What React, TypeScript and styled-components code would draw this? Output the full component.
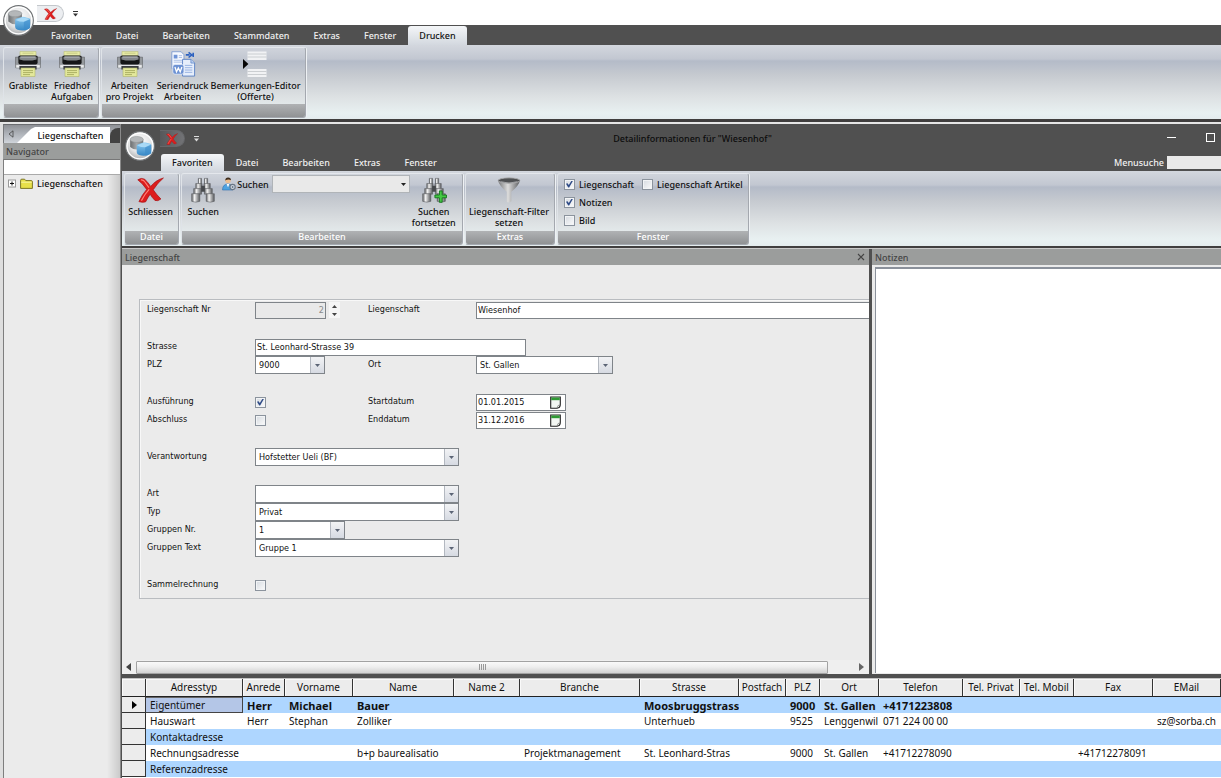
import React from 'react';
import styled, { createGlobalStyle } from 'styled-components';

const UI = `"Noto Sans", "Open Sans", sans-serif`;
const FORM = `"DejaVu Sans Condensed", "DejaVu Sans", sans-serif`;
const RIBBON = `linear-gradient(180deg, #d3d7de 0px, #c2c7d1 14px, #b4bbc8 16px, #c6cad0 30px, #dde1e3 52px, #e8f0f1 68px, #e4ecee 100%)`;

const GlobalStyle = createGlobalStyle`
  *, *::before, *::after { box-sizing: border-box; }
  html, body, #root { height: 100%; }
  body { margin: 0; background: #fff; font-family: ${UI}; font-size: 9px; font-weight: 500; line-height: 11px; color: #111; overflow: hidden; }
  button, input, select, textarea { font: inherit; color: inherit; margin: 0; padding: 0; border: 0; border-radius: 0; background: none; outline: none; }
  svg { display: block; flex: none; }
`;

/* ---------- window chrome ---------- */
const Page = styled.div`
  display: flex;
  flex-direction: column;
  min-height: 100vh;
`;
const TitleStrip = styled.header`
  position: relative;
  display: flex;
  align-items: flex-start;
  height: 25px;
  padding: 5px 0 0 37px;
  background: #fff;
`;
const OrbButton = styled.button<{ $x: number; $y: number }>`
  position: absolute;
  left: ${(p) => p.$x}px;
  top: ${(p) => p.$y}px;
  z-index: 2;
`;
const QuickBar = styled.div<{ $dark?: boolean }>`
  display: flex;
  align-items: center;
  gap: 8px;
  color: ${(p) => (p.$dark ? '#ddd' : '#333')};
`;
const QuickPill = styled.button<{ $dark?: boolean }>`
  display: flex;
  align-items: center;
  justify-content: center;
  width: ${(p) => (p.$dark ? 25 : 27)}px;
  height: 17px;
  border: 1px solid ${(p) => (p.$dark ? '#66676a' : '#c3c7cb')};
  border-left: 0;
  border-radius: 0 9px 9px 0;
  background: ${(p) => (p.$dark ? 'linear-gradient(90deg, #56575a, #727376)' : '#eceef1')};
`;
const MenuBar = styled.nav<{ $inner?: boolean }>`
  display: flex;
  align-items: stretch;
  height: ${(p) => (p.$inner ? 18 : 20)}px;
  padding-left: 39px;
  background: #505050;
`;
const MenuTab = styled.button<{ $active?: boolean }>`
  display: flex;
  align-items: center;
  padding: 0 12px;
  color: ${(p) => (p.$active ? '#111' : '#f0f0f0')};
  ${(p) =>
    p.$active &&
    `margin-top: 1px; padding: 0 11px; border-radius: 3px 3px 0 0; background: linear-gradient(180deg, #f4f6f8, #d3d8df);`}
`;
const MenuSearch = styled.label`
  display: flex;
  align-items: center;
  gap: 3px;
  margin-left: auto;
  color: #f0f0f0;
`;
const MenuSearchInput = styled.input`
  width: 54px;
  height: 13px;
  background: #e9e9e9;
  color: #111;
`;

/* ---------- ribbon ---------- */
const Ribbon = styled.div<{ $inner?: boolean }>`
  display: flex;
  gap: 2px;
  height: 77px;
  padding: 2px 0 1px ${(p) => (p.$inner ? 2 : 3)}px;
  background: ${RIBBON};
  border-bottom: ${(p) => (p.$inner ? 2 : 3)}px solid #403e3e;
`;
const Group = styled.section<{ $w: number }>`
  display: flex;
  flex-direction: column;
  flex: none;
  width: ${(p) => p.$w}px;
  border: 1px solid #a4a8af;
  border-top-color: #e4e7ec;
  border-left-color: #dfe3e8;
  border-radius: 3px;
  box-shadow: 1px 0 0 #eef1f4;
  overflow: hidden;
`;
const GroupBody = styled.div`
  display: flex;
  flex: 1;
  align-items: flex-start;
  justify-content: center;
  padding: 1px 2px 0 0;
`;
const GroupFoot = styled.div`
  height: 13px;
  line-height: 12px;
  text-align: center;
  color: #fff;
  background: linear-gradient(180deg, #b0b2b4, #909294);
`;
const BigButton = styled.button<{ $w: number }>`
  display: flex;
  flex-direction: column;
  align-items: center;
  flex: none;
  gap: 3px;
  width: ${(p) => p.$w}px;
  padding-top: 2px;
  white-space: nowrap;
  text-align: center;
`;
const SearchTool = styled.label`
  display: flex;
  align-items: center;
  gap: 1px;
  height: 18px;
`;
const CheckGrid = styled.div`
  display: grid;
  grid-template-columns: 78px auto;
  grid-auto-rows: 18px;
  width: 100%;
  padding-left: 6px;
`;
const CheckLabel = styled.label`
  display: flex;
  align-items: center;
  gap: 4px;
  white-space: nowrap;
`;
const Check = styled.input.attrs({ type: 'checkbox' })`
  appearance: none;
  display: grid;
  place-items: center;
  flex: none;
  width: 11px;
  height: 11px;
  border: 1px solid #8b939d;
  background: linear-gradient(135deg, #d5dae0, #fbfbfb);
  box-shadow: inset 0 0 0 1px #f2f4f6;
  &:checked::after {
    content: '';
    width: 7px;
    height: 7px;
    background: #2e4a86;
    clip-path: polygon(0 45%, 22% 40%, 40% 65%, 80% 0, 100% 5%, 45% 100%, 32% 100%);
  }
`;

/* ---------- work area ---------- */
const Work = styled.div`
  display: flex;
  flex: 1;
  border-top: 2px solid #e6e6e6;
`;
const Navigator = styled.aside`
  display: flex;
  flex-direction: column;
  flex: none;
  width: 121px;
  padding-left: 3px;
  background: #dedede;
  border-right: 1px solid #8a8a8a;
`;
const NavTabs = styled.div`
  display: flex;
  align-items: flex-end;
  height: 19px;
  background: linear-gradient(180deg, #8e9095 0, #a9adb3 40%, #cfd4da 100%);
  border-top: 1px solid #6a6c70;
  border-left: 1px solid #77797c;
`;
const NavArrow = styled.button`
  align-self: center;
  padding: 0 3px 0 4px;
`;
const NavTab = styled.button`
  height: 16px;
  width: 93px;
  padding-left: 14px;
  background: #fff;
  clip-path: polygon(0 100%, 14px 12%, 18px 0, 100% 0, 100% 100%);
`;
const NavTabNext = styled.div`
  flex: 1;
  height: 15px;
  border-radius: 8px 0 0 0;
  background: #424242;
`;
const PaneHead = styled.h2`
  display: flex;
  align-items: center;
  justify-content: space-between;
  flex: none;
  height: 16px;
  margin: 0;
  padding: 0 4px 0 3px;
  font-size: 9px;
  font-weight: inherit;
  color: #444;
  background: #9b9d9c;
`;
const NavBody = styled.div`
  flex: 1;
  border-left: 1px solid #7e7e7e;
  background: linear-gradient(90deg, #ebebeb 0, #ebebeb 103px, #c8c8c8 117px);
`;
const NavFilter = styled.input`
  display: block;
  width: 100%;
  height: 16px;
  background: #fff;
  border-top: 1px solid #777;
  border-bottom: 1px solid #aaa;
`;
const TreeItem = styled.div`
  display: flex;
  align-items: center;
  gap: 4px;
  height: 17px;
  padding-left: 4px;
`;

const Detail = styled.main`
  display: flex;
  flex-direction: column;
  flex: 1;
  min-width: 0;
  background: #505050;
  padding-left: 1px;
`;
const DetailTitle = styled.header`
  position: relative;
  display: grid;
  grid-template-columns: 58px 1fr 54px;
  align-items: center;
  height: 29px;
  padding-left: 38px;
  background: #505050;
`;
const TitleText = styled.h1`
  margin: 0;
  font-size: 9px;
  font-weight: inherit;
  color: #0c0c0c;
  text-align: center;
`;
const WinButtons = styled.div`
  display: flex;
  justify-content: space-between;
  padding-right: 6px;
  padding-bottom: 3px;
`;
const Split = styled.div`
  display: grid;
  grid-template-columns: minmax(0, 747fr) minmax(0, 349fr);
  gap: 3px;
  flex: 1;
  border-top: 1px solid #c9c9c9;
`;
const Pane = styled.section`
  display: flex;
  flex-direction: column;
  min-width: 0;
  background: #ebebeb;
`;
const PlainButton = styled.button`
  color: inherit;
`;
const NotesFrame = styled.div`
  display: flex;
  flex: 1;
  padding: 2px 0 1px 3px;
`;
const Notes = styled.textarea`
  flex: 1;
  width: 100%;
  resize: none;
  background: #fff;
  border: solid #8b919b;
  border-width: 2px 0 0 1px;
`;

/* ---------- form ---------- */
const FormFrame = styled.fieldset`
  min-width: 0;
  margin: 34px 0 0 17px;
  padding: 1px 0 4px 7px;
  border: 1px solid #b9bcc0;
  border-right: 0;
  box-shadow: inset 1px 1px 0 #f8f8f8;
  font-family: ${FORM};
  font-weight: 400;
`;
const Block = styled.div`
  & + & {
    margin-top: 19px;
  }
`;
const Line = styled.div`
  display: grid;
  grid-template-columns: 108px 113px 108px 1fr;
  align-items: center;
  height: 18px;
  white-space: nowrap;
`;
const FieldLabel = styled.label`
  padding-bottom: 1px;
`;
const Field = styled.input<{ $w?: number }>`
  width: ${(p) => (p.$w ? `${p.$w}px` : '100%')};
  height: 17px;
  padding: 0 1px;
  border: 1px solid #7f8489;
  background: #fff;
  &:disabled {
    background: #e9e9e9;
    color: #8a8a8a;
    text-align: right;
  }
`;
const OpenField = styled(Field)`
  border-right: 0;
`;
const SpinWrap = styled.div`
  display: flex;
  align-items: center;
  gap: 3px;
`;
const SpinButtons = styled.div`
  display: flex;
  flex-direction: column;
  background: #f6f6f6;
`;
const SpinButton = styled.button`
  display: grid;
  place-items: center;
  width: 11px;
  height: 8px;
`;
const SelectFrame = styled.div<{ $w: number; $ribbon?: boolean }>`
  display: grid;
  grid-template-areas: 'box';
  width: ${(p) => p.$w}px;
  height: 18px;
  border: 1px solid ${(p) => (p.$ribbon ? '#b0b4b8' : '#7f8489')};
  background: ${(p) => (p.$ribbon ? '#e9e9e9' : '#fff')};
`;
const SelectInput = styled.select`
  grid-area: box;
  appearance: none;
  width: 100%;
  height: 16px;
  padding: 0 16px 0 3px;
`;
const SelectArrow = styled.span<{ $ribbon?: boolean }>`
  grid-area: box;
  justify-self: end;
  display: grid;
  place-items: center;
  width: ${(p) => (p.$ribbon ? 11 : 14)}px;
  pointer-events: none;
  color: ${(p) => (p.$ribbon ? '#222' : '#5b6475')};
  ${(p) => !p.$ribbon && `border-left: 1px solid #b3b8c0; background: linear-gradient(180deg, #f2f3f5, #d6dae2);`}
`;
const DateFrame = styled.div`
  display: flex;
  align-items: center;
  width: 90px;
  height: 17px;
  padding-right: 4px;
  border: 1px solid #7f8489;
  background: #fff;
`;
const DateField = styled.input`
  flex: 1;
  min-width: 0;
  padding-left: 1px;
`;

const ScrollBar = styled.div`
  display: flex;
  align-items: center;
  height: 14px;
  margin-top: auto;
  padding: 0 5px 0 4px;
  background: #efefef;
`;
const ScrollTrack = styled.div`
  flex: 1;
  padding: 0 31px 0 5px;
`;
const ScrollThumb = styled.div`
  display: grid;
  place-items: center;
  height: 13px;
  border: 1px solid #a2a2a2;
  border-radius: 1px;
  background: linear-gradient(180deg, #fafafa 0, #eee 45%, #d2d2d2 100%);
`;

/* ---------- address table ---------- */
const TableFrame = styled.div`
  margin-top: 4px;
  padding-bottom: 1px;
  border-top: 1px solid #c4c4c4;
  background: #fff;
  overflow: hidden;
`;
const Table = styled.table`
  width: 100%;
  table-layout: fixed;
  border-collapse: separate;
  border-spacing: 0;
  font-size: 10px;
  font-weight: 400;
  line-height: 16px;
`;
const Th = styled.th`
  height: 18px;
  padding: 0;
  font-weight: 400;
  line-height: 17px;
  white-space: nowrap;
  background: #ececec;
  border-right: 1px solid #333;
  border-bottom: 1px solid #222;
  box-shadow: inset 1px 1px 0 #fafafa;
`;
const Row = styled.tr<{ $blue?: boolean; $strong?: boolean }>`
  background: ${(p) => (p.$blue ? '#aed6ff' : '#fff')};
  ${(p) => p.$strong && `font-weight: 700; font-size: 11px;`}
`;
const Td = styled.td`
  height: 16px;
  padding: 0 0 0 4px;
  line-height: 15px;
  white-space: nowrap;
  overflow: hidden;
`;
const TypeCell = styled(Td)<{ $focus?: boolean }>`
  ${(p) => p.$focus && `background: #b4c6e7; box-shadow: inset -1px -1px 0 #444, inset 0 1px 0 #666; font-weight: 400; font-size: 10px;`}
`;
const Marker = styled.td`
  height: 16px;
  padding: 0 0 0 10px;
  background: #ececec;
  border-right: 1px solid #333;
  border-bottom: 1px solid #333;
`;

/* ---------- icons ---------- */
const Orb = ({ size }: { size: number }) => (
  <svg width={size} height={size} viewBox="0 0 32 32">
    <defs>
      <radialGradient id={`orb${size}`} cx="50%" cy="35%" r="65%">
        <stop offset="0" stopColor="#ffffff" />
        <stop offset=".6" stopColor="#e2e3e4" />
        <stop offset="1" stopColor="#a6a8aa" />
      </radialGradient>
      <linearGradient id={`cyl${size}`} x1="0" x2="1">
        <stop offset="0" stopColor="#6b6e70" />
        <stop offset=".5" stopColor="#a5a8aa" />
        <stop offset="1" stopColor="#727577" />
      </linearGradient>
      <linearGradient id={`cube${size}`} x1="0" x2="0" y1="0" y2="1">
        <stop offset="0" stopColor="#8ecdf3" />
        <stop offset="1" stopColor="#3787c4" />
      </linearGradient>
    </defs>
    <circle cx="16" cy="16" r="15.3" fill={`url(#orb${size})`} stroke="#707375" strokeWidth="1.2" />
    <circle cx="16" cy="16" r="13.8" fill="none" stroke="#fff" strokeWidth="1.4" />
    <path d="M5.5 9 V17 Q11 22 19.5 18 V9 Z" fill={`url(#cyl${size})`} />
    <ellipse cx="12.5" cy="9" rx="7" ry="3.2" fill="#b4b7b9" stroke="#85898c" strokeWidth=".5" />
    <path d="M12.5 15.8 Q12.5 14.6 14 14 L19.5 12.3 Q20.5 12 22 12.3 L27 13.6 Q28 14 28 15.2 V22.6 Q28 24 26.6 24.7 Q21 27.6 15 25.6 Q12.7 24.8 12.5 22.6 Z" fill={`url(#cube${size})`} />
    <path d="M13 15.4 L20 12.6 L27.6 14.4 L21.5 17.4 Q17 17.4 13 15.4 Z" fill="#a9d9f6" />
    <path d="M21.5 17.6 V26.2 Q25 25.8 28 23.5 V14.7 Z" fill="#3a8bc9" opacity=".6" />
  </svg>
);

const RedCross = ({ w, h }: { w: number; h: number }) => (
  <svg width={w} height={h} viewBox="0 0 28 26" preserveAspectRatio="none">
    <path d="M.8 2.8 Q4.5 .4 8 2.2 Q11.4 5.4 14.2 9.4 Q19.6 3 27.4 1 Q21.2 6 16.8 12.8 Q20 17.4 24.8 22 Q21.6 24.6 18.6 23.4 Q15.6 20.6 13.6 17.2 Q10.8 21 9 24.8 Q5.4 26 2 24.6 Q5 18 10 12.4 Q6 6.6 .8 2.8 Z" fill="#dc1d1d" stroke="#a81215" strokeWidth=".7" />
    <path d="M4 3 Q6.5 2.6 8.2 5 L12.4 10.6 M4.6 23.6 Q7.8 17.4 12.6 12.4" fill="none" stroke="#ff8278" strokeWidth="1.2" />
  </svg>
);

const QuickArrow = () => (
  <svg width="7" height="6" viewBox="0 0 7 6">
    <path d="M1 .5 H6" stroke="currentColor" strokeWidth="1" />
    <path d="M1 2.5 H6 L3.5 5.5 Z" fill="currentColor" />
  </svg>
);

const Caret = () => (
  <svg width="5" height="3" viewBox="0 0 5 3">
    <path d="M0 0 H5 L2.5 3 Z" fill="currentColor" />
  </svg>
);

const Printer = () => (
  <svg width="26" height="26" viewBox="0 0 26 26">
    <path d="M5 .4 H21 V7 H5 Z" fill="#e6eaa6" stroke="#b9bd76" strokeWidth=".6" />
    <path d="M7.5 2.2 H18.5" stroke="#c0c47c" strokeWidth=".8" />
    <path d="M.4 6.2 H3.4 V5.4 H22.6 V6.2 H25.6 V16.4 H.4 Z" fill="#94989c" stroke="#5c5f63" strokeWidth=".6" />
    <path d="M.8 13.6 H25.2 V17 H.8 Z" fill="#e9ebed" stroke="#777a7e" strokeWidth=".5" />
    <rect x="3.4" y="4.4" width="19.2" height="9" rx="2" fill="#151617" />
    <path d="M5.4 5.4 H20.6 Q21.6 5.4 21.6 6.4 V8.4 Q13 10.8 4.4 8.4 V6.4 Q4.4 5.4 5.4 5.4 Z" fill="#83878b" />
    <path d="M5.6 6 H20.4" stroke="#c9ccce" strokeWidth=".8" />
    <path d="M4.4 15 H21.6 V18.6 H4.4 Z" fill="#3a3c3f" />
    <path d="M6 17 H20 V25.5 H6 Z" fill="#e3e89b" stroke="#b0b56c" strokeWidth=".6" />
    <path d="M8 19.6 H18 M8 21.6 H18 M8 23.6 H15" stroke="#9da255" strokeWidth=".8" />
  </svg>
);

const MailMerge = () => (
  <svg width="26" height="26" viewBox="0 0 28 28">
    <path d="M2 .8 H12 L15 4 V19 H2 Z" fill="#f5f8fe" stroke="#6c8fcd" strokeWidth=".8" />
    <path d="M4 4 H8 V8 H4 Z" fill="#6f93d6" />
    <path d="M9.5 5 H13 M9.5 7 H13 M4 10 H13 M4 12 H13" stroke="#9fb7e2" strokeWidth=".9" />
    <path d="M13.5 9 H22.5 L26.5 13 V27 H13.5 Z" fill="#e6eefb" stroke="#4e78bf" strokeWidth=".9" />
    <path d="M22.5 9 V13 H26.5" fill="#b8cdf0" stroke="#4e78bf" strokeWidth=".7" />
    <path d="M16 15.5 H24 M16 18 H24 M16 20.5 H24 M16 23 H24" stroke="#8aa8dd" strokeWidth=".9" />
    <path d="M17 4.2 H21 M20 1.5 L23.5 4.2 L20 7 M25 2 V6.5" fill="none" stroke="#2c61c0" strokeWidth="1.7" />
    <rect x="3" y="14.5" width="12" height="10.5" rx="2.5" fill="#6d92d3" stroke="#e8effb" strokeWidth=".8" />
    <path d="M5.3 17.3 L7 22.4 L9 18.3 L11 22.4 L12.8 17.3" fill="none" stroke="#fff" strokeWidth="1.4" />
  </svg>
);

const RemarkEditor = () => (
  <svg width="26" height="26" viewBox="0 0 26 26">
    <path d="M0 8 L5.4 13 L0 18 Z" fill="#050505" />
    <path d="M4.5 .5 H23.5 V9 H4.5 Z M4.5 18 H23.5 V26 H4.5 Z" fill="#f1f2f4" />
    <path d="M4.5 3 H23.5 M4.5 6 H23.5 M4.5 20.5 H23.5 M4.5 23.5 H23.5" stroke="#c6c9cd" strokeWidth=".9" />
  </svg>
);

const Binoculars = ({ plus }: { plus?: boolean }) => (
  <svg width="26" height="26" viewBox="0 0 28 28">
    <defs>
      <linearGradient id={plus ? 'binB' : 'binA'} x1="0" x2="1">
        <stop offset="0" stopColor="#5b5d60" />
        <stop offset=".35" stopColor="#f2f2f2" />
        <stop offset="1" stopColor="#56585b" />
      </linearGradient>
    </defs>
    <g fill={`url(#${plus ? 'binB' : 'binA'})`} stroke="#5b5d60" strokeWidth=".6">
      <path d="M9 1.5 H12.4 V9 H9 Z" />
      <path d="M15.6 1.5 H19 V9 H15.6 Z" />
      <path d="M6.2 7 H13 V13 H6.2 Z" />
      <path d="M15 7 H21.8 V13 H15 Z" />
      <path d="M4 12.5 H12.4 V18.5 H4 Z" />
      <path d="M15.6 12.5 H24 V18.5 H15.6 Z" />
      <path d="M1.8 18 H10.6 V26.2 Q6 28 1.8 26.2 Z" />
      <path d="M17.4 18 H26.2 V26.2 Q22 28 17.4 26.2 Z" />
    </g>
    <path d="M12 9.5 H16 V16 H12 Z" fill="#47494c" />
    {plus && (
      <path d="M19.8 15 H22.8 V19.4 H27.4 V22.4 H22.8 V27.2 H19.8 V22.4 H15 V19.4 H19.8 Z" fill="#45c845" stroke="#11761a" strokeWidth="1" />
    )}
  </svg>
);

const Funnel = () => (
  <svg width="26" height="26" viewBox="0 0 28 28">
    <defs>
      <linearGradient id="fun" x1="0" x2="1">
        <stop offset="0" stopColor="#77797b" />
        <stop offset=".45" stopColor="#dcdcdc" />
        <stop offset="1" stopColor="#5e6062" />
      </linearGradient>
    </defs>
    <path d="M2.3 3.8 Q3 9 11.5 16 V27 Q14 28 16.5 26 V16 Q25 9 25.7 3.8 Z" fill="url(#fun)" />
    <ellipse cx="14" cy="3.8" rx="11.7" ry="2.9" fill="#4f5153" stroke="#b4b5b6" strokeWidth=".9" />
    <path d="M5 5 Q14 8.2 23 5" fill="none" stroke="#a9abad" strokeWidth=".9" />
  </svg>
);

const PersonSearch = () => (
  <svg width="14" height="14" viewBox="0 0 14 14">
    <circle cx="6" cy="3.6" r="2.7" fill="#eebd8c" />
    <path d="M3.2 3.4 Q3.4 .3 6.2 .4 Q9 .5 8.9 3.2 Q6.5 1.8 3.2 3.4 Z" fill="#3d2c1d" />
    <path d="M.5 13 Q.6 7.2 5.8 7 Q10 7 10.8 11 V13 Z" fill="#4fa3e0" stroke="#2b6fae" strokeWidth=".6" />
    <path d="M4.6 7 L6 10.2 L7.4 7 Z" fill="#fff" />
    <circle cx="10.6" cy="10" r="2.6" fill="#cfd8e2" stroke="#6a7684" strokeWidth="1.1" />
    <circle cx="10.6" cy="10" r=".9" fill="#6a7684" />
  </svg>
);

const Folder = () => (
  <svg width="13" height="12" viewBox="0 0 13 12">
    <path d="M.6 2.4 Q.6 1.2 1.8 1.2 H4.6 L5.8 2.6 H11.2 Q12.4 2.6 12.4 3.8 V10.4 H.6 Z" fill="#e8e04a" stroke="#6f6a1a" strokeWidth=".9" />
    <path d="M1.2 4.2 H11.8" stroke="#fbf8b0" strokeWidth=".9" />
  </svg>
);

const PlusBox = () => (
  <svg width="8" height="9" viewBox="0 0 8 9">
    <rect x=".5" y="1" width="7" height="7" fill="#fff" stroke="#999" />
    <path d="M2 4.5 H6 M4 2.5 V6.5" stroke="#111" />
  </svg>
);

const Calendar = () => (
  <svg width="11" height="13" viewBox="0 0 11 13">
    <path d="M.7 1 H10.3 V9 Q10 12 7 12.2 H.7 Z" fill="#f3f7f3" stroke="#222" strokeWidth="1.1" />
    <path d="M1.2 1.5 H9.8 V4.2 H1.2 Z" fill="#2f9a34" />
    <path d="M10.3 8.8 Q7.4 8.6 7 12.2" fill="none" stroke="#777" strokeWidth=".7" />
  </svg>
);

const Triangle = ({ dir, color = '#444' }: { dir: 'left' | 'right' | 'up' | 'down'; color?: string }) => {
  const d = {
    left: 'M5 0 V8 L0 4 Z',
    right: 'M0 0 V8 L5 4 Z',
    up: 'M0 3 H5 L2.5 0 Z',
    down: 'M0 0 H5 L2.5 3 Z',
  }[dir];
  const tall = dir === 'left' || dir === 'right';
  return (
    <svg width="5" height={tall ? 8 : 3} viewBox={tall ? '0 0 5 8' : '0 0 5 3'}>
      <path d={d} fill={color} />
    </svg>
  );
};

/* ---------- composed controls ---------- */
const Combo = ({ id, w, value, ribbon, label }: { id?: string; w: number; value: string; ribbon?: boolean; label?: string }) => (
  <SelectFrame $w={w} $ribbon={ribbon}>
    <SelectInput id={id} defaultValue={value} aria-label={label}>
      <option value={value}>{value}</option>
    </SelectInput>
    <SelectArrow $ribbon={ribbon}>
      <Caret />
    </SelectArrow>
  </SelectFrame>
);

const DateInput = ({ id, value }: { id: string; value: string }) => (
  <DateFrame>
    <DateField id={id} defaultValue={value} />
    <PlainButton aria-label="Kalender">
      <Calendar />
    </PlainButton>
  </DateFrame>
);

const menuMain = ['Favoriten', 'Datei', 'Bearbeiten', 'Stammdaten', 'Extras', 'Fenster', 'Drucken'];
const menuDetail = ['Favoriten', 'Datei', 'Bearbeiten', 'Extras', 'Fenster'];

const columns: [string, number?][] = [
  ['Adresstyp', 97],
  ['Anrede', 42],
  ['Vorname', 68],
  ['Name', 101],
  ['Name 2', 66],
  ['Branche', 120],
  ['Strasse', 99],
  ['Postfach', 47],
  ['PLZ', 34],
  ['Ort', 59],
  ['Telefon', 84],
  ['Tel. Privat', 57],
  ['Tel. Mobil', 54],
  ['Fax', 79],
  ['EMail'],
];

const addresses: string[][] = [
  ['Eigentümer', 'Herr', 'Michael', 'Bauer', '', '', 'Moosbruggstrass', '', '9000', 'St. Gallen', '+4171223808', '', '', '', ''],
  ['Hauswart', 'Herr', 'Stephan', 'Zolliker', '', '', 'Unterhueb', '', '9525', 'Lenggenwil', '071 224 00 00', '', '', '', 'sz@sorba.ch'],
  ['Kontaktadresse', '', '', '', '', '', '', '', '', '', '', '', '', '', ''],
  ['Rechnungsadresse', '', '', 'b+p baurealisatio', '', 'Projektmanagement', 'St. Leonhard-Stras', '', '9000', 'St. Gallen', '+41712278090', '', '', '+41712278091', ''],
  ['Referenzadresse', '', '', '', '', '', '', '', '', '', '', '', '', '', ''],
];

export default function App() {
  return (
    <Page>
      <GlobalStyle />
      <TitleStrip>
        <OrbButton $x={3} $y={5} aria-label="Anwendungsmenü">
          <Orb size={31} />
        </OrbButton>
        <QuickBar>
          <QuickPill aria-label="Schliessen">
            <RedCross w={13} h={12} />
          </QuickPill>
          <QuickArrow />
        </QuickBar>
      </TitleStrip>
      <MenuBar>
        {menuMain.map((m) => (
          <MenuTab key={m} $active={m === 'Drucken'}>
            {m}
          </MenuTab>
        ))}
      </MenuBar>
      <Ribbon>
        <Group $w={96}>
          <GroupBody>
            <BigButton $w={44}>
              <Printer />
              Grabliste
            </BigButton>
            <BigButton $w={44}>
              <Printer />
              <span>Friedhof<br />Aufgaben</span>
            </BigButton>
          </GroupBody>
          <GroupFoot />
        </Group>
        <Group $w={205}>
          <GroupBody>
            <BigButton $w={52}>
              <Printer />
              <span>Arbeiten<br />pro Projekt</span>
            </BigButton>
            <BigButton $w={54}>
              <MailMerge />
              <span>Seriendruck<br />Arbeiten</span>
            </BigButton>
            <BigButton $w={92}>
              <RemarkEditor />
              <span>Bemerkungen-Editor<br />(Offerte)</span>
            </BigButton>
          </GroupBody>
          <GroupFoot />
        </Group>
      </Ribbon>

      <Work>
        <Navigator>
          <NavTabs>
            <NavArrow aria-label="Zurück">
              <svg width="6" height="8" viewBox="0 0 6 8">
                <path d="M5 .8 V7.2 L1 4 Z" fill="none" stroke="#444" strokeWidth=".8" />
              </svg>
            </NavArrow>
            <NavTab>Liegenschaften</NavTab>
            <NavTabNext />
          </NavTabs>
          <PaneHead>Navigator</PaneHead>
          <NavBody>
            <NavFilter aria-label="Navigator filtern" />
            <TreeItem>
              <PlusBox />
              <Folder />
              Liegenschaften
            </TreeItem>
          </NavBody>
        </Navigator>

        <Detail>
          <DetailTitle>
            <OrbButton $x={3} $y={7} aria-label="Fenstermenü">
              <Orb size={30} />
            </OrbButton>
            <QuickBar $dark>
              <QuickPill $dark aria-label="Fenster schliessen">
                <RedCross w={12} h={12} />
              </QuickPill>
              <QuickArrow />
            </QuickBar>
            <TitleText>Detailinformationen für "Wiesenhof"</TitleText>
            <WinButtons>
              <PlainButton aria-label="Minimieren">
                <svg width="9" height="9" viewBox="0 0 9 9">
                  <path d="M0 4.5 H9" stroke="#fff" />
                </svg>
              </PlainButton>
              <PlainButton aria-label="Maximieren">
                <svg width="9" height="9" viewBox="0 0 9 9">
                  <rect x=".5" y=".5" width="8" height="8" fill="none" stroke="#fff" />
                </svg>
              </PlainButton>
            </WinButtons>
          </DetailTitle>
          <MenuBar $inner>
            {menuDetail.map((m) => (
              <MenuTab key={m} $active={m === 'Favoriten'}>
                {m}
              </MenuTab>
            ))}
            <MenuSearch>
              Menusuche
              <MenuSearchInput />
            </MenuSearch>
          </MenuBar>
          <Ribbon $inner>
            <Group $w={55}>
              <GroupBody>
                <BigButton $w={50}>
                  <RedCross w={27} h={26} />
                  Schliessen
                </BigButton>
              </GroupBody>
              <GroupFoot>Datei</GroupFoot>
            </Group>
            <Group $w={282}>
              <GroupBody>
                <BigButton $w={38}>
                  <Binoculars />
                  Suchen
                </BigButton>
                <SearchTool>
                  <PersonSearch />
                  Suchen
                  <span />
                  <span />
                  <Combo w={138} value="" ribbon label="Suchen" />
                </SearchTool>
                <BigButton $w={48}>
                  <Binoculars plus />
                  <span>Suchen<br />fortsetzen</span>
                </BigButton>
              </GroupBody>
              <GroupFoot>Bearbeiten</GroupFoot>
            </Group>
            <Group $w={90}>
              <GroupBody>
                <BigButton $w={84}>
                  <Funnel />
                  <span>Liegenschaft-Filter<br />setzen</span>
                </BigButton>
              </GroupBody>
              <GroupFoot>Extras</GroupFoot>
            </Group>
            <Group $w={192}>
              <GroupBody>
                <CheckGrid>
                  <CheckLabel>
                    <Check defaultChecked />
                    Liegenschaft
                  </CheckLabel>
                  <CheckLabel>
                    <Check />
                    Liegenschaft Artikel
                  </CheckLabel>
                  <CheckLabel>
                    <Check defaultChecked />
                    Notizen
                  </CheckLabel>
                  <span />
                  <CheckLabel>
                    <Check />
                    Bild
                  </CheckLabel>
                </CheckGrid>
              </GroupBody>
              <GroupFoot>Fenster</GroupFoot>
            </Group>
          </Ribbon>

          <Split>
            <Pane>
              <PaneHead>
                Liegenschaft
                <PlainButton aria-label="Bereich schliessen">
                  <svg width="8" height="8" viewBox="0 0 8 8">
                    <path d="M1 1 L7 7 M7 1 L1 7" stroke="#444" strokeWidth="1.1" />
                  </svg>
                </PlainButton>
              </PaneHead>
              <FormFrame>
                <Block>
                  <Line>
                    <FieldLabel htmlFor="nr">Liegenschaft Nr</FieldLabel>
                    <SpinWrap>
                      <Field id="nr" $w={71} defaultValue="2" disabled />
                      <SpinButtons>
                        <SpinButton aria-label="Erhöhen">
                          <Triangle dir="up" />
                        </SpinButton>
                        <SpinButton aria-label="Verringern">
                          <Triangle dir="down" />
                        </SpinButton>
                      </SpinButtons>
                    </SpinWrap>
                    <FieldLabel htmlFor="name">Liegenschaft</FieldLabel>
                    <OpenField id="name" defaultValue="Wiesenhof" />
                  </Line>
                </Block>
                <Block>
                  <Line>
                    <FieldLabel htmlFor="str">Strasse</FieldLabel>
                    <Field id="str" $w={271} defaultValue="St. Leonhard-Strasse 39" />
                  </Line>
                  <Line>
                    <FieldLabel htmlFor="plz">PLZ</FieldLabel>
                    <Combo id="plz" w={70} value="9000" />
                    <FieldLabel htmlFor="ort">Ort</FieldLabel>
                    <Combo id="ort" w={137} value="St. Gallen" />
                  </Line>
                </Block>
                <Block>
                  <Line>
                    <FieldLabel htmlFor="ausf">Ausführung</FieldLabel>
                    <Check id="ausf" defaultChecked />
                    <FieldLabel htmlFor="start">Startdatum</FieldLabel>
                    <DateInput id="start" value="01.01.2015" />
                  </Line>
                  <Line>
                    <FieldLabel htmlFor="absch">Abschluss</FieldLabel>
                    <Check id="absch" />
                    <FieldLabel htmlFor="ende">Enddatum</FieldLabel>
                    <DateInput id="ende" value="31.12.2016" />
                  </Line>
                </Block>
                <Block>
                  <Line>
                    <FieldLabel htmlFor="verant">Verantwortung</FieldLabel>
                    <Combo id="verant" w={204} value="Hofstetter Ueli (BF)" />
                  </Line>
                </Block>
                <Block>
                  <Line>
                    <FieldLabel htmlFor="art">Art</FieldLabel>
                    <Combo id="art" w={204} value="" />
                  </Line>
                  <Line>
                    <FieldLabel htmlFor="typ">Typ</FieldLabel>
                    <Combo id="typ" w={204} value="Privat" />
                  </Line>
                  <Line>
                    <FieldLabel htmlFor="gnr">Gruppen Nr.</FieldLabel>
                    <Combo id="gnr" w={90} value="1" />
                  </Line>
                  <Line>
                    <FieldLabel htmlFor="gtext">Gruppen Text</FieldLabel>
                    <Combo id="gtext" w={204} value="Gruppe 1" />
                  </Line>
                </Block>
                <Block>
                  <Line>
                    <FieldLabel htmlFor="sammel">Sammelrechnung</FieldLabel>
                    <Check id="sammel" />
                  </Line>
                </Block>
              </FormFrame>
              <ScrollBar>
                <PlainButton aria-label="Nach links">
                  <Triangle dir="left" />
                </PlainButton>
                <ScrollTrack>
                  <ScrollThumb>
                    <svg width="7" height="6" viewBox="0 0 7 6">
                      <path d="M.5 0 V6 M2.5 0 V6 M4.5 0 V6 M6.5 0 V6" stroke="#999" />
                    </svg>
                  </ScrollThumb>
                </ScrollTrack>
                <PlainButton aria-label="Nach rechts">
                  <Triangle dir="right" color="#666" />
                </PlainButton>
              </ScrollBar>
            </Pane>
            <Pane>
              <PaneHead>Notizen</PaneHead>
              <NotesFrame>
                <Notes aria-label="Notizen" />
              </NotesFrame>
            </Pane>
          </Split>

          <TableFrame>
            <Table>
              <colgroup>
                <col width={24} />
                {columns.map(([name, w]) => (
                  <col key={name} width={w} />
                ))}
              </colgroup>
              <thead>
                <tr>
                  <Th aria-label="Auswahl" />
                  {columns.map(([name]) => (
                    <Th key={name} scope="col">
                      {name}
                    </Th>
                  ))}
                </tr>
              </thead>
              <tbody>
                {addresses.map(([type, ...rest], i) => (
                  <Row key={type} $blue={i % 2 === 0} $strong={i === 0}>
                    <Marker>{i === 0 && <Triangle dir="right" color="#000" />}</Marker>
                    <TypeCell $focus={i === 0}>{type}</TypeCell>
                    {rest.map((v, j) => (
                      <Td key={j}>{v}</Td>
                    ))}
                  </Row>
                ))}
              </tbody>
            </Table>
          </TableFrame>
        </Detail>
      </Work>
    </Page>
  );
}
